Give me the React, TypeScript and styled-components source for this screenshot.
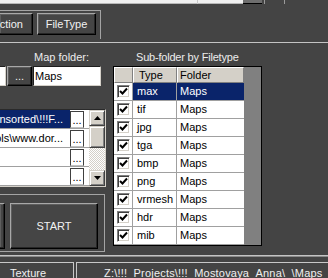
import React from 'react';
import styled, { createGlobalStyle, css } from 'styled-components';

const GlobalStyle = createGlobalStyle`
  html, body { margin: 0; padding: 0; background: #444444; overflow: hidden; }
  * { box-sizing: border-box; }
`;

const Root = styled.div`
  width: 328px;
  height: 278px;
  overflow: hidden;
  background: #444444;
  color: #ececec;
  font-family: "Liberation Sans", Arial, sans-serif;
  font-size: 11px;
  line-height: 13px;
  display: flex;
  flex-direction: column;
`;

const TopStrip = styled.div`
  flex: 0 0 4px;
  display: flex;
`;

const StripPart = styled.div<{ $w?: number; $bg: string; $line?: string }>`
  ${(p) => (p.$w ? css`flex: 0 0 ${p.$w}px;` : css`flex: 1;`)}
  background: ${(p) => p.$bg};
  border-bottom: 1px solid ${(p) => p.$line ?? p.$bg};
`;

const TopPanel = styled.div`
  flex: 0 0 38px;
  padding-top: 6px;
`;

const GroupTop = styled.div`
  width: 101px;
  height: 29px;
  border-top: 1px solid #a4a4a4;
  border-right: 1px solid #a4a4a4;
  padding-top: 2px;
  display: flex;
  gap: 4px;
`;

const DarkButton = styled.div<{ $w: number; $h: number; $cut?: boolean; $end?: boolean; $low?: boolean }>`
  flex: 0 0 ${(p) => p.$w}px;
  width: ${(p) => p.$w}px;
  height: ${(p) => p.$h}px;
  background: #454545;
  color: #f2f2f2;
  border: 1px solid;
  border-color: #a8a8a8 #000 #000 #a8a8a8;
  ${(p) => p.$cut && css`border-left: none;`}
  box-shadow: inset -1px -1px 0 #262626, inset 1px 1px 0 #5e5e5e;
  display: flex;
  align-items: ${(p) => (p.$low ? 'flex-end' : 'center')};
  justify-content: ${(p) => (p.$end ? 'flex-end' : 'center')};
  padding-right: ${(p) => (p.$end ? 9 : 0)}px;
  padding-bottom: ${(p) => (p.$low ? 2 : 0)}px;
  white-space: nowrap;
  overflow: hidden;
`;

const HRule = styled.div<{ $h: number }>`
  flex: 0 0 ${(p) => p.$h}px;
  border-top: 1px solid #c4c4c4;
  ${(p) => p.$h > 1 && css`border-bottom: 1px solid #8a8a8a;`}
`;

const Middle = styled.div`
  flex: 0 0 212px;
  display: grid;
  grid-template-columns: 106px 149px;
  column-gap: 7px;
`;

const Column = styled.div`
  display: flex;
  flex-direction: column;
  padding-top: 8px;
`;

const Label = styled.div<{ $indent: number; $tight?: boolean }>`
  height: 13px;
  padding-left: ${(p) => p.$indent}px;
  white-space: nowrap;
  color: #ececec;
  letter-spacing: ${(p) => (p.$tight ? '-0.2px' : '0')};
`;

const FieldRow = styled.div`
  display: flex;
  gap: 1px;
  height: 20px;
  margin-top: 2px;
`;

const TextInput = styled.div<{ $w: number; $cut?: boolean }>`
  flex: 0 0 ${(p) => p.$w}px;
  height: 20px;
  background: #ffffff;
  color: #000;
  border: 1px solid;
  border-color: #1e1e1e #d4d0c8 #d4d0c8 #1e1e1e;
  ${(p) => p.$cut && css`border-left: none;`}
  padding-left: 1px;
  display: flex;
  align-items: center;
`;

const ListBox = styled.div`
  margin-top: 23px;
  width: 106px;
  height: 78px;
  display: flex;
  border-top: 1px solid #2a2a2a;
  border-bottom: 1px solid #d4d0c8;
  border-right: 1px solid #d4d0c8;
`;

const ListItems = styled.div`
  flex: 0 0 89px;
  background: #fff;
  display: flex;
  flex-direction: column;
`;

const ListRow = styled.div`
  height: 19px;
  flex: 0 0 19px;
  display: flex;
  border-bottom: 1px solid #a0a0a0;
`;

const ListText = styled.div<{ $sel?: boolean }>`
  flex: 0 0 70px;
  display: flex;
  justify-content: flex-end;
  align-items: center;
  overflow: hidden;
  white-space: nowrap;
  padding-right: 7px;
  background: ${(p) => (p.$sel ? '#0a246a' : '#fff')};
  color: ${(p) => (p.$sel ? '#fff' : '#000')};
`;

const CellButton = styled.div`
  flex: 0 0 14px;
  height: 17px;
  margin-top: 1px;
  background: #fff;
  color: #000;
  border: 1px solid;
  border-color: #404040 #404040 #c0c0c0 #404040;
  display: flex;
  align-items: flex-end;
  justify-content: center;
  line-height: 11px;
  padding-bottom: 1px;
`;

const ScrollBar = styled.div`
  flex: 0 0 16px;
  display: flex;
  flex-direction: column;
`;

const ScrollPiece = styled.div<{ $h?: number }>`
  ${(p) => (p.$h ? css`flex: 0 0 ${p.$h}px;` : css`flex: 1;`)}
  background: #d4d0c8;
  border: 1px solid;
  border-color: #d4d0c8 #404040 #404040 #d4d0c8;
  box-shadow: inset 1px 1px 0 #fff, inset -1px -1px 0 #808080;
  display: flex;
  align-items: center;
  justify-content: center;
`;

const ScrollTrack = styled.div`
  flex: 1;
  background: repeating-conic-gradient(#d4d0c8 0 25%, #ffffff 0 50%) 0 0 / 2px 2px;
`;

const StartGroup = styled.div`
  margin-top: 7px;
  width: 105px;
  height: 58px;
  border-top: 1px solid #a4a4a4;
  border-right: 1px solid #a4a4a4;
  border-bottom: 1px solid #a4a4a4;
  padding-top: 8px;
  display: flex;
  gap: 5px;
`;

const Table = styled.div`
  margin-top: 2px;
  width: 149px;
  height: 180px;
  border: 1px solid #000;
  background: #808080;
  display: flex;
  flex-direction: column;
`;

const TRow = styled.div<{ $h: number }>`
  display: flex;
  width: 130px;
  flex: 0 0 ${(p) => p.$h}px;
`;

const HeadCell = styled.div<{ $w: number; $pad: number }>`
  flex: 0 0 ${(p) => p.$w}px;
  background: #d4d0c8;
  color: #000;
  border: 1px solid;
  border-color: #fff #808080 #808080 #fff;
  padding-left: ${(p) => p.$pad}px;
  display: flex;
  align-items: center;
  white-space: nowrap;
`;

const Cell = styled.div<{ $w: number; $pad?: number; $sel?: boolean; $last?: boolean }>`
  flex: 0 0 ${(p) => p.$w}px;
  background: ${(p) => (p.$sel ? '#0a246a' : '#fff')};
  color: ${(p) => (p.$sel ? '#fff' : '#000')};
  border-bottom: 1px solid #a0a0a0;
  border-right: ${(p) => (p.$last ? 'none' : '1px solid #a0a0a0')};
  padding-left: ${(p) => p.$pad ?? 0}px;
  display: flex;
  align-items: center;
  justify-content: ${(p) => (p.$pad === undefined ? 'center' : 'flex-start')};
  white-space: nowrap;
`;

const CheckBox = styled.div`
  width: 13px;
  height: 13px;
  background: #fff;
  border: 1px solid;
  border-color: #808080 #fff #fff #808080;
  box-shadow: inset 1px 1px 0 #404040, inset -1px -1px 0 #d4d0c8;
  display: flex;
  align-items: center;
  justify-content: center;
`;

const TabBar = styled.div`
  flex: 0 0 16px;
  margin-top: 5px;
  display: flex;
  gap: 2px;
`;

const Tab = styled.div<{ $w?: number; $pad: number; $spacing?: number }>`
  ${(p) => (p.$w ? css`flex: 0 0 ${p.$w}px;` : css`flex: 1;`)}
  border-top: 1px solid #c8c8c8;
  ${(p) => (p.$w ? css`border-right: 1px solid #c8c8c8;` : css`border-left: 1px solid #c8c8c8;`)}
  padding: 4px 0 0 ${(p) => p.$pad}px;
  white-space: nowrap;
  overflow: hidden;
  color: #f0f0f0;
  letter-spacing: ${(p) => p.$spacing ?? 0}px;
`;

const Check = () => (
  <svg width="9" height="9" viewBox="0 0 9 9">
    <polyline points="1,4 3.5,6.5 8,1.5" fill="none" stroke="#000" strokeWidth="2" />
  </svg>
);

const Arrow = ({ up }: { up?: boolean }) => (
  <svg width="7" height="4" viewBox="0 0 7 4">
    <polygon points={up ? '3.5,0 7,4 0,4' : '0,0 7,0 3.5,4'} fill="#000" />
  </svg>
);

const types = ['max', 'tif', 'jpg', 'tga', 'bmp', 'png', 'vrmesh', 'hdr', 'mib'];

const listItems = [
  { text: 'Z:\\!!!_Projects\\Unsorted\\!!!F...', sel: true },
  { text: 'C:\\Downloads\\Tools\\www.dor...', sel: false },
  { text: '', sel: false },
  { text: '', sel: false },
];

export default function App() {
  return (
    <Root>
      <GlobalStyle />
      <TopStrip>
        <StripPart $w={197} $bg="#f0f0f0" $line="#b8b8b8" />
        <StripPart $w={1} $bg="#c8c8c8" />
        <StripPart $w={45} $bg="#f0f0f0" $line="#b8b8b8" />
        <StripPart $w={19} $bg="#6e6e6e" $line="#000" />
        <StripPart $w={2} $bg="#444" />
        <StripPart $w={1} $bg="#9a9a9a" />
        <StripPart $w={19} $bg="#444" />
        <StripPart $w={1} $bg="#9a9a9a" />
        <StripPart $bg="#444" />
      </TopStrip>

      <TopPanel>
        <GroupTop>
          <DarkButton $w={33} $h={22} $cut $end>
            Selection
          </DarkButton>
          <DarkButton $w={59} $h={22}>
            FileType
          </DarkButton>
        </GroupTop>
      </TopPanel>

      <HRule $h={1} />

      <Middle>
        <Column>
          <Label $indent={34}>Map folder:</Label>
          <FieldRow>
            <TextInput $w={6} $cut />
            <DarkButton $w={25} $h={20} $low>
              ...
            </DarkButton>
            <TextInput $w={68}>Maps</TextInput>
          </FieldRow>

          <ListBox>
            <ListItems>
              {listItems.map((it, i) => (
                <ListRow key={i}>
                  <ListText $sel={it.sel}>
                    <span>{it.text}</span>
                  </ListText>
                  <CellButton>...</CellButton>
                </ListRow>
              ))}
            </ListItems>
            <ScrollBar>
              <ScrollPiece $h={16}>
                <Arrow up />
              </ScrollPiece>
              <ScrollPiece $h={22} />
              <ScrollTrack />
              <ScrollPiece $h={16}>
                <Arrow />
              </ScrollPiece>
            </ScrollBar>
          </ListBox>

          <StartGroup>
            <DarkButton $w={5} $h={46} $cut />
            <DarkButton $w={88} $h={46}>
              START
            </DarkButton>
          </StartGroup>
        </Column>

        <Column>
          <Label $indent={23} $tight>
            Sub-folder by Filetype
          </Label>
          <Table>
            <TRow $h={16}>
              <HeadCell $w={19} $pad={0} />
              <HeadCell $w={44} $pad={5}>
                Type
              </HeadCell>
              <HeadCell $w={67} $pad={2}>
                Folder
              </HeadCell>
            </TRow>
            {types.map((t, i) => (
              <TRow $h={18} key={t}>
                <Cell $w={19}>
                  <CheckBox>
                    <Check />
                  </CheckBox>
                </Cell>
                <Cell $w={44} $pad={4} $sel={i === 0}>
                  {t}
                </Cell>
                <Cell $w={67} $pad={3} $sel={i === 0} $last>
                  Maps
                </Cell>
              </TRow>
            ))}
          </Table>
        </Column>
      </Middle>

      <HRule $h={2} />

      <TabBar>
        <Tab $w={74} $pad={10}>
          Texture
        </Tab>
        <Tab $pad={27} $spacing={0.2}>
          Z:\!!!_Projects\!!!_Mostovaya_Anna\_\Maps
        </Tab>
      </TabBar>
    </Root>
  );
}
